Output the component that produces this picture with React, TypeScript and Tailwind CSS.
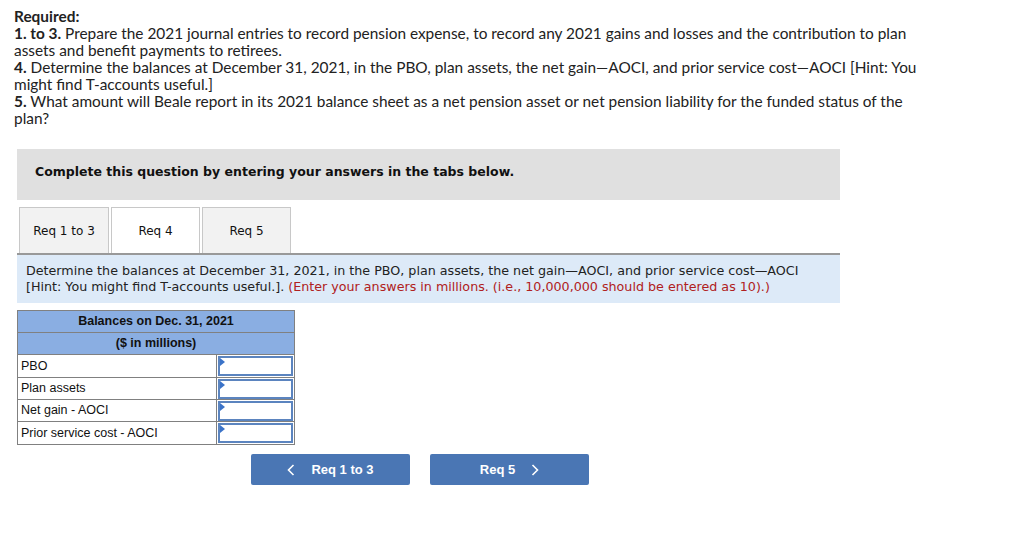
import React from "react";

const rows = [
  { label: "PBO", h: "h-[23px]" },
  { label: "Plan assets", h: "h-[22px]" },
  { label: "Net gain - AOCI", h: "h-[22px]" },
  { label: "Prior service cost - AOCI", h: "h-[23px]" },
];

function Chevron({ dir }: { dir: "left" | "right" }) {
  return (
    <svg width="8" height="12" viewBox="0 0 8 12" fill="none" stroke="white" strokeWidth="1.6">
      {dir === "left" ? <path d="M6.5 1 L1.5 6 L6.5 11" /> : <path d="M1.5 1 L6.5 6 L1.5 11" />}
    </svg>
  );
}

function InputCell() {
  return (
    <td className="p-0 border border-[#808080] w-[78px]">
      <div className="relative h-[20px] mx-[1px] border-2 border-[#5b84bf] bg-white">
        <div className="absolute left-0 top-0 w-0 h-0 border-t-[4px] border-b-[4px] border-l-[5px] border-t-transparent border-b-transparent border-l-[#3b73c8]" />
      </div>
    </td>
  );
}

export default function App() {
  return (
    <div className="w-[1024px] h-[556px] bg-white overflow-hidden">
      <div className="pl-[14px] pt-[8px] text-[15.4px] leading-[17px] text-[#222] font-['Lato','Open_Sans',sans-serif] whitespace-nowrap">
        <p className="font-bold">Required:</p>
        <p>
          <b>1. to 3.</b> Prepare the 2021 journal entries to record pension expense, to record any 2021 gains and losses and the contribution to plan
          <br />
          assets and benefit payments to retirees.
        </p>
        <p>
          <b>4.</b> Determine the balances at December 31, 2021, in the PBO, plan assets, the net gain—AOCI, and prior service cost—AOCI [Hint: You
          <br />
          might find T-accounts useful.]
        </p>
        <p>
          <b>5.</b> What amount will Beale report in its 2021 balance sheet as a net pension asset or net pension liability for the funded status of the
          <br />
          plan?
        </p>
      </div>

      <div className="ml-[17px] w-[823px] mt-[22px] font-['DejaVu_Sans','Verdana',sans-serif]">
        <div className="h-[51px] bg-[#e0e0e0] flex items-center pl-[18px] pb-[5px] text-[12.5px] font-bold text-[#111]">
          Complete this question by entering your answers in the tabs below.
        </div>

        <div className="flex gap-[2px] pl-[2px] mt-[7px] h-[46px] text-[12px] text-[#111]">
          <div className="w-[90px] bg-[#f2f2f2] border border-b-0 border-[#c8c8c8] flex items-center justify-center">Req 1 to 3</div>
          <div className="w-[89px] bg-white border border-b-0 border-[#c8c8c8] flex items-center justify-center">Req 4</div>
          <div className="w-[89px] bg-[#f2f2f2] border border-b-0 border-[#c8c8c8] flex items-center justify-center">Req 5</div>
        </div>

        <div className="bg-[#ddeaf8] border-t-2 border-[#999] pl-[9px] pt-[8px] pb-[8px] text-[12.7px] leading-[16px] text-[#222]">
          Determine the balances at December 31, 2021, in the PBO, plan assets, the net gain—AOCI, and prior service cost—AOCI
          <br />
          [Hint: You might find T-accounts useful.].{" "}
          <span className="text-[#b02020]">(Enter your answers in millions. (i.e., 10,000,000 should be entered as 10).)</span>
        </div>

        <table className="mt-[7px] border-collapse text-[12.5px] font-['Liberation_Sans','Arial',sans-serif] text-[#111]">
          <thead>
            <tr>
              <th colSpan={2} className="h-[22px] bg-[#8aaee2] border border-[#808080] font-bold">Balances on Dec. 31, 2021</th>
            </tr>
            <tr>
              <th colSpan={2} className="h-[22px] bg-[#8aaee2] border border-[#808080] font-bold">($ in millions)</th>
            </tr>
          </thead>
          <tbody>
            {rows.map((r) => (
              <tr key={r.label}>
                <td className={`w-[199px] ${r.h} border border-[#808080] pl-[3px] text-left`}>{r.label}</td>
                <InputCell />
              </tr>
            ))}
          </tbody>
        </table>

        <div className="flex gap-[20px] ml-[234px] mt-[9px] font-['Liberation_Sans','Arial',sans-serif] text-[13px] font-bold text-white">
          <button className="w-[159px] h-[31px] bg-[#4a76b4] rounded-[2px] flex items-center justify-center gap-[16px]">
            <Chevron dir="left" />
            <span>Req 1 to 3</span>
          </button>
          <button className="w-[159px] h-[31px] bg-[#4a76b4] rounded-[2px] flex items-center justify-center gap-[16px]">
            <span>Req 5</span>
            <Chevron dir="right" />
          </button>
        </div>
      </div>
    </div>
  );
}
